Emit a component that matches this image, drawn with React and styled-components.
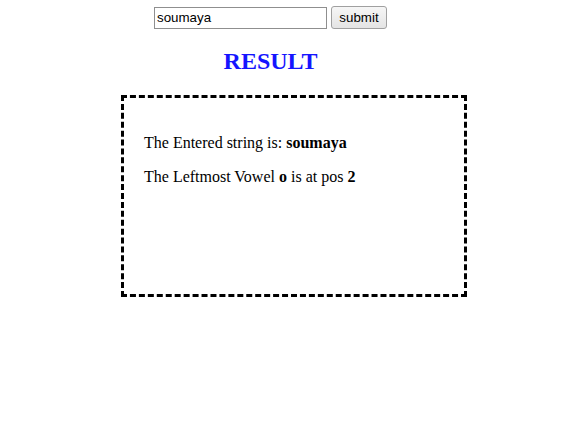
import React from "react";
import styled, { createGlobalStyle } from "styled-components";

const Global = createGlobalStyle`
  body {
    margin: 6px 8px 8px;
    font-family: "Liberation Serif", "Times New Roman", serif;
    background: #fff;
    color: #000;
  }
`;

const Top = styled.div`
  width: 525px;
`;

const Form = styled.form`
  margin: 0;
  display: flex;
  justify-content: center;
  align-items: center;
  gap: 4px;
`;

const TextInput = styled.input`
  font-family: "Liberation Sans", Arial, sans-serif;
  font-size: 13.333px;
  width: 173px;
  height: 22px;
  box-sizing: border-box;
  padding: 1px 2px;
  border: 1px solid #8f8f8f;
  border-radius: 0;
  margin: 0;
  color: #000;
`;

const Submit = styled.button`
  font-family: "Liberation Sans", Arial, sans-serif;
  font-size: 13.333px;
  width: 56px;
  height: 23px;
  box-sizing: border-box;
  padding: 1px 6px;
  margin: 0;
  background: linear-gradient(#f6f6f6, #e4e4e4);
  border: 1px solid #a0a0a0;
  border-radius: 3px;
  color: #000;
`;

const Title = styled.h2`
  color: #1515ff;
  font-size: 24px;
  font-weight: bold;
  text-align: center;
  margin: 19px 0 20px;
`;

const ResultBox = styled.div`
  width: 300px;
  height: 156px;
  padding: 20px;
  border: 3px dashed #000;
  margin: 0 auto;
  font-size: 16px;
`;

const Line = styled.p`
  margin: 16px 0;
`;

export default function App() {
  return (
    <>
      <Global />
      <Top>
        <Form onSubmit={(e) => e.preventDefault()}>
          <TextInput type="text" defaultValue="soumaya" />
          <Submit type="submit">submit</Submit>
        </Form>
        <Title>RESULT</Title>
      </Top>
      <ResultBox>
        <Line>
          The Entered string is: <b>soumaya</b>
        </Line>
        <Line>
          The Leftmost Vowel <b>o</b> is at pos <b>2</b>
        </Line>
      </ResultBox>
    </>
  );
}
